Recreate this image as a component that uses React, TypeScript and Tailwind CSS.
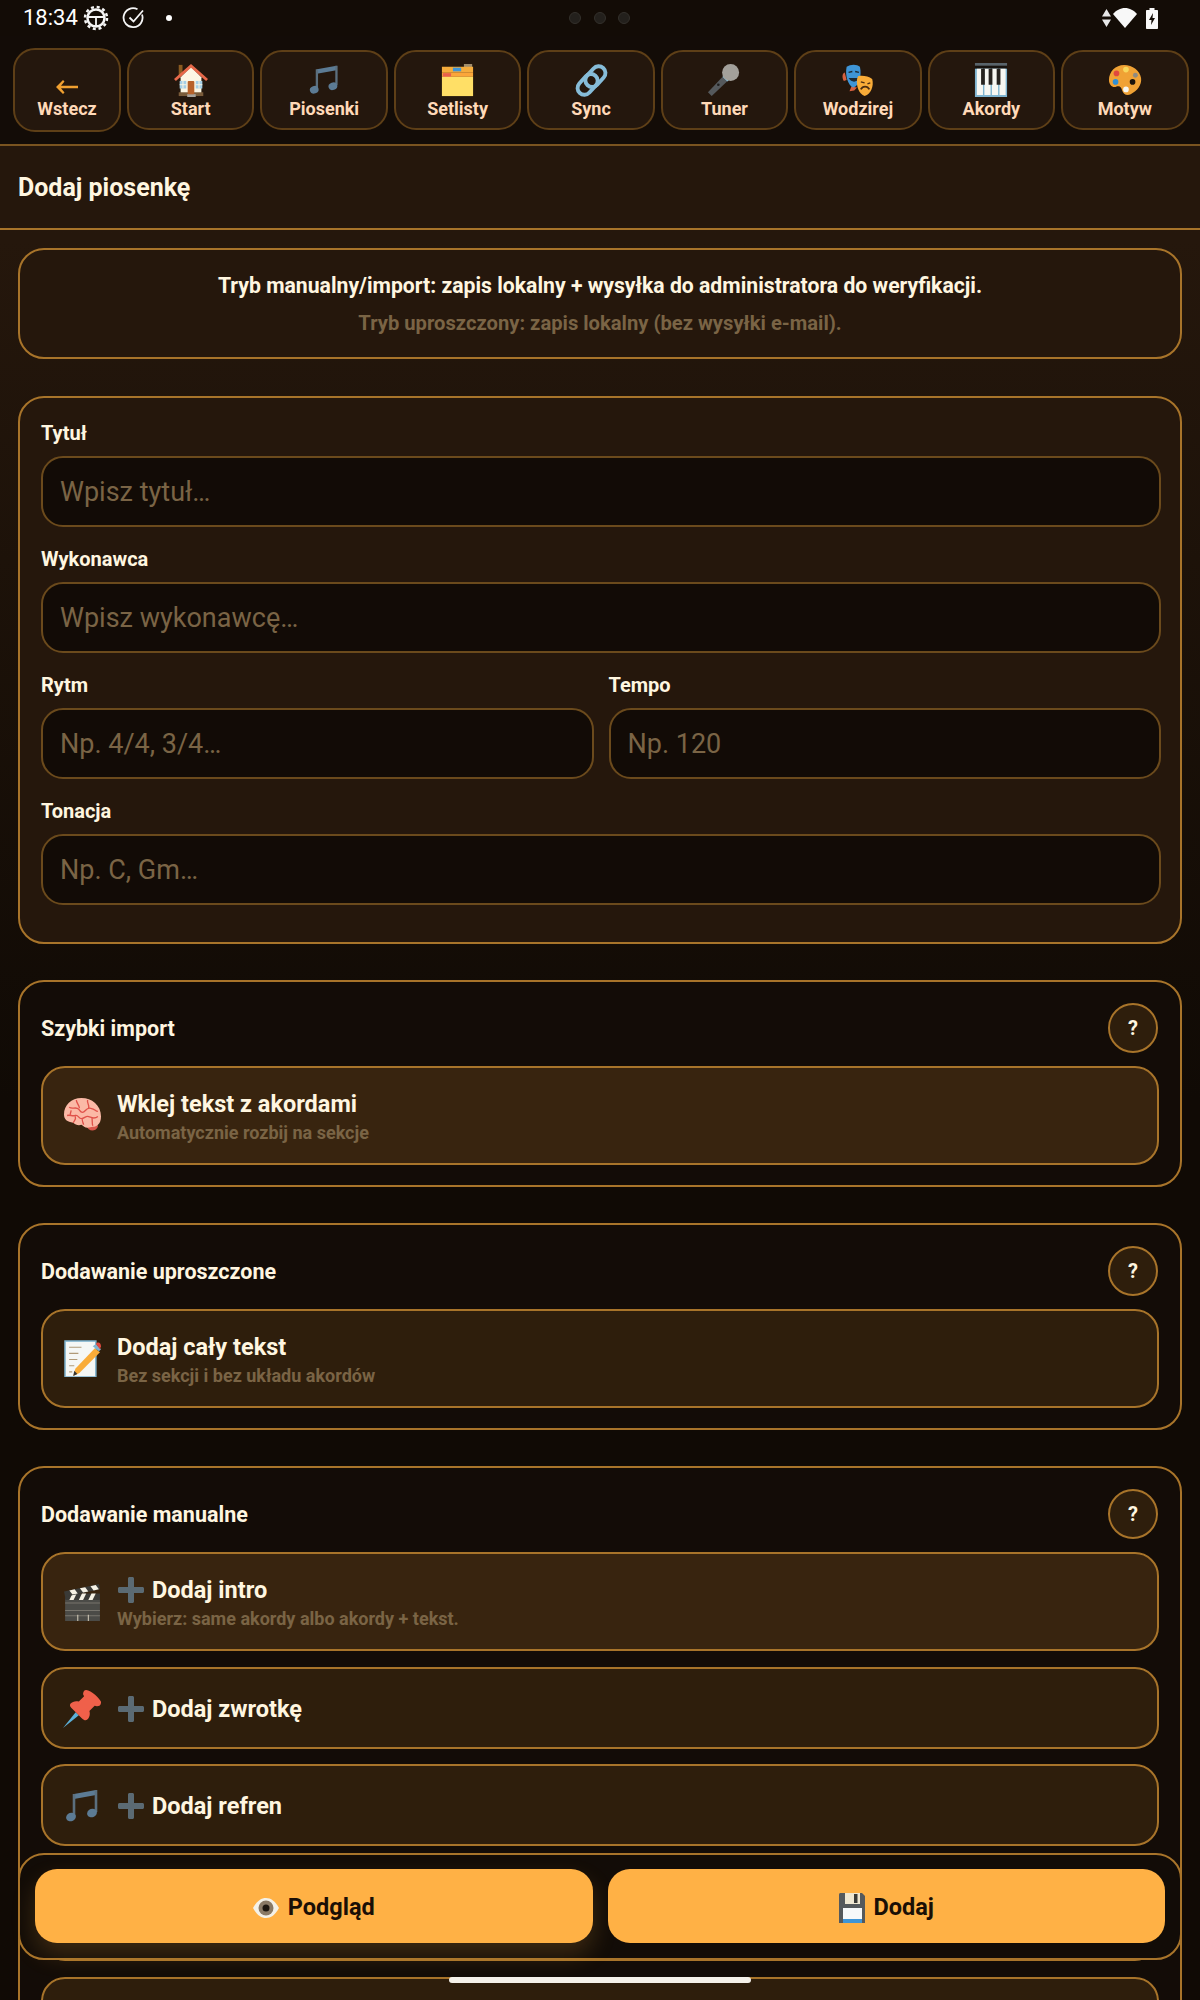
import React from 'react';

/* --- EMOJI DRAWINGS --- */

const House = ({ size = 36 }: { size?: number }) => (
    <svg width={size} height={size} viewBox="0 0 36 36">
        <rect x="5" y="2" width="4" height="12" fill="#8a5a20" />
        <path d="M7 32V15L18 4l11 11v17z" fill="#fdf6e3" />
        <path d="M0 17L18 1l18 16-2 2L18 5 2 19z" fill="#e8694a" />
        <rect x="5" y="31" width="26" height="4" fill="#7a5c3a" />
        <rect x="14" y="33" width="9" height="3" fill="#a8a29a" />
        <rect x="14.5" y="19" width="7" height="14" rx="1" fill="#b8622a" />
        <rect x="6" y="19" width="7" height="8" fill="#a5cfe6" />
        <rect x="23" y="19" width="7" height="8" fill="#a5cfe6" />
        <path d="M9.5 19v8M6 23h7M26.5 19v8M23 23h7" stroke="#fdf6e3" strokeWidth="1" />
    </svg>
);

const Notes = ({ size = 36 }: { size?: number }) => (
    <svg width={size} height={size} viewBox="0 0 36 36">
        <path d="M10 6l22-4v5l-22 4z" fill="#5c7b94" />
        <path d="M10 6v22M32 2v22" stroke="#5b6f7e" strokeWidth="2.6" />
        <ellipse cx="7" cy="29" rx="5" ry="4.2" transform="rotate(-20 7 29)" fill="#5c7b94" />
        <ellipse cx="28" cy="25" rx="5" ry="4.2" transform="rotate(-20 28 25)" fill="#5c7b94" />
    </svg>
);

const Dividers = ({ size = 36 }: { size?: number }) => (
    <svg width={size} height={size} viewBox="0 0 36 36">
        <rect x="25" y="0" width="9" height="4" fill="#a08c6a" />
        <rect x="1" y="3" width="34" height="6" fill="#f5ac3c" />
        <rect x="13" y="4" width="9" height="4" fill="#3f95d6" />
        <rect x="1" y="9" width="34" height="5" fill="#fba63a" />
        <rect x="2" y="10" width="9" height="4" fill="#e8604c" />
        <rect x="1" y="14" width="34" height="21" fill="#ffdf66" />
    </svg>
);

const LinkIcon = ({ size = 36 }: { size?: number }) => (
    <svg width={size} height={size} viewBox="0 0 36 36" fill="none" stroke="#86bcd8" strokeWidth="4">
        <rect x="15" y="2" width="14" height="24" rx="7" transform="rotate(42 22 14)" />
        <rect x="7" y="10" width="14" height="24" rx="7" transform="rotate(42 14 22)" />
    </svg>
);

const Mic = ({ size = 36 }: { size?: number }) => (
    <svg width={size} height={size} viewBox="0 0 36 36">
        <path d="M19 12l5 5L5 35l-4-4z" fill="#55595c" />
        <path d="M16.500 14.500l5 5 3-2.500-5.500-5.500z" fill="#8dc3dd" />
        <circle cx="25" cy="10" r="9" fill="#a3a09a" />
        <circle cx="12" cy="23" r="1.400" fill="#1f1f1f" />
    </svg>
);

const Masks = ({ size = 36 }: { size?: number }) => (
    <svg width={size} height={size} viewBox="0 0 36 36">
        <path d="M4 10c-3 1-3 6-1 9l3-1zM11 25l-2 5 5-1 3-3z" fill="#d5603f" />
        <path d="M6 4c4-3 11-3 14 0 2 8 0 20-7 22C7 24 4 12 6 4z" fill="#3f95d6" />
        <path d="M8 16c3 5 9 5 11 0z" fill="#1e2a33" />
        <path d="M8 10l4-1M15 9l4 1" stroke="#1e2a33" strokeWidth="1.400" fill="none" />
        <path d="M18 14c5-1 11 0 15 3 2 7-1 16-8 18-6-2-9-10-8-18z" fill="#f9ac38" />
        <path d="M21 28c2-4 7-4 9 0" stroke="#4a2c10" strokeWidth="2" fill="none" />
        <path d="M21 20l4 1M28 22l3-1" stroke="#4a2c10" strokeWidth="1.400" />
    </svg>
);

const Piano = ({ size = 36 }: { size?: number }) => (
    <svg width={size} height={size} viewBox="0 0 36 36">
        <rect x="1" y="0" width="34" height="3" fill="#59646b" />
        <rect x="1" y="3" width="34" height="3" fill="#17130f" />
        <rect x="1" y="6" width="34" height="30" fill="#7fb4d0" />
        <path d="M3 6h6.500v28H3zM11 6h6.500v28H11zM19 6h6.500v28H19zM27 6h6.500v28H27z" fill="#f7f7f2" />
        <path d="M7.500 6h4v17h-4zM15.500 6h4v17h-4zM24 6h4v17h-4z" fill="#27231f" />
    </svg>
);

const Palette = ({ size = 36 }: { size?: number }) => (
    <svg width={size} height={size} viewBox="0 0 36 36">
        <path d="M17 2C8 2 1 9 1 18c0 5 4 9 8 7 4-1 5 1 6 4 1 4 5 6 9 4 7-3 12-10 11-17-1-8-9-14-18-14z" fill="#f0a235" />
        <circle cx="9" cy="11" r="3" fill="#e0483e" />
        <circle cx="19" cy="7" r="3" fill="#f7d75c" />
        <circle cx="29" cy="13" r="2.600" fill="#8f8a80" />
        <circle cx="8" cy="20" r="3" fill="#2f8fd6" />
        <circle cx="26" cy="20" r="3" fill="#1b130b" />
        <circle cx="19" cy="28" r="3" fill="#f6f6f0" />
    </svg>
);

const Brain = ({ size = 37 }: { size?: number }) => (
    <svg width={size} height={size} viewBox="0 0 36 36">
        <path d="M22 28c1 5 8 7 11 1l-1-6z" fill="#d9574c" />
        <path d="M0 17C0 8 7 1 17 1c10 0 19 7 19 18 0 7-4 10-8 10l-5 1c-3 0-4-2-6-3-3 1-6 0-8-2C3 24 0 22 0 17z" fill="#fbb9a6" />
        <path d="M5 10c3 2 5 0 8 1s2 4 5 4 3-5 8-4 4 3 7 3M3 18c3-1 5 1 8 0s3 3 6 3 4-3 7-2 5 3 9 0M12 3c0 3 3 5 3 8M23 3c-1 3 2 4 1 8M9 25c1-2 3-3 2-6M19 27c0-2-2-3-1-6M28 28c-1-3 0-5-1-8M7 13l-1 4" stroke="#e0524a" strokeWidth="1.300" fill="none" />
    </svg>
);

const Memo = ({ size = 37 }: { size?: number }) => (
    <svg width={size} height={size} viewBox="0 0 36 36">
        <rect x="1" y="1" width="30" height="35" fill="#f5f7f5" stroke="#7fb4d0" strokeWidth="1.500" />
        <path d="M5 7h12M5 13h9M5 19h8M5 25h5M5 31h3" stroke="#b09a78" strokeWidth="1" />
        <path d="M30 8l5 4-20 20-6 3 2-7z" fill="#f9ac38" />
        <path d="M28 6l6 5 2-2-5-5z" fill="#7fb4d0" />
        <path d="M31 4c2-3 5-1 5 2l-1 3z" fill="#e0483e" />
        <path d="M9 35l1-5 3 3z" fill="#333" />
    </svg>
);

const Clapper = ({ size = 38 }: { size?: number }) => (
    <svg width={size} height={size} viewBox="0 0 36 36">
        <rect x="2" y="15" width="33" height="21" fill="#4b4b47" />
        <path d="M2 19h33M2 26h33M2 31h33" stroke="#78756d" strokeWidth="1" />
        <path d="M14 30v6M24 30v6" stroke="#cfc8b5" strokeWidth="1" />
        <rect x="2" y="10" width="33" height="6" fill="#3a3a37" />
        <path d="M6 16l3-6h4l-3 6zM15 16l3-6h4l-3 6zM24 16l3-6h4l-3 6z" fill="#f5f1e4" />
        <path d="M1 8l33-7 1 5L2 13z" fill="#3a3a37" />
        <path d="M6 7l5-1 3 4-5 1zM16 5l5-1 3 4-5 1zM26 3l5-1 3 4-5 1z" fill="#f5f1e4" />
    </svg>
);

const Pin = ({ size = 38 }: { size?: number }) => (
    <svg width={size} height={size} viewBox="0 0 36 36">
        <path d="M0 36l12-15 3 3z" fill="#5cb0d8" />
        <path d="M22 0c-2 0-3 2-3 4l1 2-5 5c-3-1-6 0-8 2-1 2 0 3 2 5l9 9c2 2 4 2 5 1 2-2 3-5 2-8l5-5c3 1 6 0 6-3 1-2-9-12-14-12z" fill="#f0604a" />
    </svg>
);

const Plus = () => (
    <svg width={26} height={26} viewBox="0 0 26 26" className="shrink-0 ml-[1px]">
        <path d="M10 1.500c0-.8.7-1.500 1.500-1.500h3c.8 0 1.500.7 1.500 1.500V10h8.500c.8 0 1.500.7 1.500 1.500v3c0 .8-.7 1.500-1.500 1.500H16v8.500c0 .8-.7 1.500-1.500 1.500h-3c-.8 0-1.500-.7-1.500-1.500V16H1.500C.7 16 0 15.300 0 14.500v-3C0 10.700.7 10 1.500 10H10z" fill="#5b6a73" />
    </svg>
);

const Eye = () => (
    <svg width={26} height={20} viewBox="0 0 26 20">
        <path d="M0 10C4 3 8 0 13 0s9 3 13 10c-4 7-8 10-13 10S4 17 0 10z" fill="#f4f1e8" />
        <circle cx="13" cy="10" r="7.500" fill="#8a7a66" />
        <circle cx="13" cy="10" r="3.500" fill="#1d1710" />
    </svg>
);

const Floppy = () => (
    <svg width={26} height={30} viewBox="0 0 26 30">
        <path d="M0 1.500C0 .7.7 0 1.500 0H23l3 3v27H0z" fill="#55595c" />
        <rect x="6" y="0" width="15" height="11" fill="#efe7d2" />
        <rect x="15" y="1" width="3.500" height="9" fill="#3a3a37" />
        <rect x="4" y="15" width="19" height="12" fill="#f7f9fa" />
        <rect x="4" y="26" width="19" height="4" fill="#3f95d6" />
    </svg>
);

/* --- STATUS BAR --- */

const StatusBar = () => (
    <div className="h-[36px] shrink-0 bg-[#130c06] flex items-center relative text-white">
        <span className="ml-[23px] text-[22px] leading-none w-[56px]">18:34</span>
        <svg width="26" height="26" viewBox="0 0 26 26" className="ml-[4px]" fill="none" stroke="#f5f5f5">
            <circle cx="13" cy="13" r="8.500" strokeWidth="2.500" />
            <circle cx="13" cy="13" r="11" strokeWidth="2.500" strokeDasharray="3 2.800" />
            <path d="M5 12h16M13 12v9" strokeWidth="1.800" />
        </svg>
        <svg width="24" height="24" viewBox="0 0 24 24" className="ml-[13px]" fill="none" stroke="#f5f5f5" strokeWidth="1.800">
            <path d="M20 8.500A9.500 9.500 0 1 1 15.500 3.300" />
            <path d="M7.500 11.500l4 4L21 4.500" />
        </svg>
        <span className="ml-[20px] w-[6px] h-[6px] rounded-full bg-white" />
        <div className="absolute left-[569px] top-[12px] flex gap-[12.5px]">
            <span className="w-[12px] h-[12px] rounded-full bg-[#23201c] border border-[#33302b]" />
            <span className="w-[12px] h-[12px] rounded-full bg-[#23201c] border border-[#33302b]" />
            <span className="w-[12px] h-[12px] rounded-full bg-[#23201c] border border-[#33302b]" />
        </div>
        <div className="ml-auto mr-[42px] flex items-center">
            <svg width="9" height="18" viewBox="0 0 9 18" fill="#e8e8e8">
                <path d="M4.500 0L9 7.500H0zM4.500 18L0 10.500h9z" />
            </svg>
            <svg width="24" height="20" viewBox="0 0 24 20" className="ml-[2px]" fill="#f8f8f8">
                <path d="M0 6C3 2.500 7.500 0 12 0s9 2.500 12 6L12 20z" />
            </svg>
            <svg width="12" height="21" viewBox="0 0 12 21" className="ml-[9px]">
                <path d="M3.500 0h5v2H11c.6 0 1 .4 1 1v17c0 .6-.4 1-1 1H1c-.6 0-1-.4-1-1V3c0-.6.4-1 1-1h2.500z" fill="#f8f8f8" />
                <path d="M7 5L3 12h2.500L5 17l4-7H6.500z" fill="#130c06" />
            </svg>
        </div>
    </div>
);

/* --- NAV --- */

const NavButton = ({ label, icon }: { label: string, icon: React.ReactNode }) => (
    <div className="w-[127.45px] h-[80px] shrink-0 bg-[#24170d] border-2 border-[#5e3f17] rounded-[22px] flex flex-col items-center pt-[11px]">
        <div className="h-[34px] flex items-center justify-center">{icon}</div>
        <span className="text-[18px] leading-[20px] font-bold text-[#ffd9b8] mt-[2px]">{label}</span>
    </div>
);

const TopNav = () => (
    <div className="h-[110px] shrink-0 bg-[#130c07] border-b-2 border-[#7a5420] flex items-center pl-[13px] gap-[6px]">
        <div className="w-[108px] h-[84px] shrink-0 bg-[#24170d] border-2 border-[#5e3f17] rounded-[22px] flex flex-col items-center pt-[30px]">
            <svg width="22" height="14" viewBox="0 0 22 14" fill="#f0a030">
                <path d="M7 0l1.500 1.500L5 5.800h17v2.400H5l3.500 4.300L7 14 0 7z" />
            </svg>
            <span className="text-[18px] leading-[20px] font-bold text-[#ffd9b8] mt-[5px]">Wstecz</span>
        </div>
        <NavButton label="Start" icon={<House size={34} />} />
        <NavButton label="Piosenki" icon={<Notes size={32} />} />
        <NavButton label="Setlisty" icon={<Dividers size={33} />} />
        <NavButton label="Sync" icon={<LinkIcon size={35} />} />
        <NavButton label="Tuner" icon={<Mic size={34} />} />
        <NavButton label="Wodzirej" icon={<Masks size={34} />} />
        <NavButton label="Akordy" icon={<Piano size={34} />} />
        <NavButton label="Motyw" icon={<Palette size={34} />} />
    </div>
);

/* --- FORM PARTS --- */

const Field = ({ label, placeholder, className }: { label: string, placeholder: string, className?: string }) => (
    <div className={className}>
        <div className="h-[22px] flex items-center text-[20px] font-bold text-[#fff6e0]">{label}</div>
        <input
            placeholder={placeholder}
            className="mt-[12px] w-full h-[71px] bg-[#120b06] border-2 border-[#6b4a1c] rounded-[22px] pl-[17px] text-[27px] text-[#fff6e0] placeholder:text-[#7a6445] focus:outline-none"
        />
    </div>
);

const HelpRow = ({ title }: { title: string }) => (
    <div className="h-[50px] flex items-center justify-between">
        <h3 className="text-[21.5px] font-bold text-[#fff6e0] mt-[3px]">{title}</h3>
        <button className="w-[50px] h-[50px] mr-[1px] rounded-full bg-[#2e1e0c] border-2 border-[#a8742a] text-[20px] font-bold text-[#fff6e0]">?</button>
    </div>
);

const ActionRow = ({ icon, title, sub, plus, h = 'h-[99px]', bg = 'bg-[#2e1e0c]' }: { icon?: React.ReactNode, title?: string, sub?: string, plus?: boolean, h?: string, bg?: string }) => (
    <div className={`${h} ${bg} shrink-0 border-2 border-[#a8742a] rounded-[24px] flex items-center pl-[20px]`}>
        {icon && <div className="w-[38px] flex justify-center shrink-0">{icon}</div>}
        <div className="ml-[16px]">
            {title && (
                <div className="flex items-center gap-[8px] text-[23.5px] leading-[30px] font-bold text-[#fff6e0]">
                    {plus && <Plus />}
                    <span>{title}</span>
                </div>
            )}
            {sub && <div className="text-[18px] leading-[20px] font-bold text-[#7a6445] mt-[4px]">{sub}</div>}
        </div>
    </div>
);

const App = () => {
    return (
        <div className="relative w-[1200px] h-[2000px] overflow-hidden flex flex-col font-['Roboto',sans-serif] bg-linear-to-b from-[#25170c] from-[12%] to-[#100a05] to-[55%]">
            <StatusBar />
            <TopNav />

            {/* HEADER */}
            <div className="h-[84px] shrink-0 bg-[#25170c] border-b-2 border-[#a8742a] flex items-center pl-[18px] pt-[2px]">
                <h1 className="text-[25px] font-bold text-[#fff6e0]">Dodaj piosenkę</h1>
            </div>

            <div className="px-[18px] pt-[18px] flex flex-col gap-[36px]">
                {/* INFO */}
                <section className="h-[111px] shrink-0 bg-[#25170c] border-2 border-[#a8742a] rounded-[26px] flex flex-col items-center pt-[22px]">
                    <p className="text-[21.2px] leading-[28px] font-bold text-[#fff6e0]">Tryb manualny/import: zapis lokalny + wysyłka do administratora do weryfikacji.</p>
                    <p className="text-[20.2px] leading-[24px] font-bold text-[#7a6445] mt-[11px]">Tryb uproszczony: zapis lokalny (bez wysyłki e-mail).</p>
                </section>

                {/* SONG FIELDS */}
                <section className="h-[548px] mt-[1px] shrink-0 bg-[#25170c] border-2 border-[#a8742a] rounded-[26px] pl-[21px] pr-[19px] pt-[24px] flex flex-col gap-[21px]">
                    <Field label="Tytuł" placeholder="Wpisz tytuł…" />
                    <Field label="Wykonawca" placeholder="Wpisz wykonawcę…" />
                    <div className="flex gap-[15px]">
                        <Field label="Rytm" placeholder="Np. 4/4, 3/4…" className="flex-1" />
                        <Field label="Tempo" placeholder="Np. 120" className="flex-1" />
                    </div>
                    <Field label="Tonacja" placeholder="Np. C, Gm…" />
                </section>

                {/* QUICK IMPORT */}
                <section className="h-[207px] shrink-0 bg-[#130c07] border-2 border-[#a8742a] rounded-[26px] px-[21px] pt-[21px] flex flex-col gap-[13px]">
                    <HelpRow title="Szybki import" />
                    <ActionRow icon={<Brain />} title="Wklej tekst z akordami" sub="Automatycznie rozbij na sekcje" bg="bg-[#38240f]" />
                </section>

                {/* SIMPLE */}
                <section className="h-[207px] shrink-0 bg-[#130c07] border-2 border-[#a8742a] rounded-[26px] px-[21px] pt-[21px] flex flex-col gap-[13px]">
                    <HelpRow title="Dodawanie uproszczone" />
                    <ActionRow icon={<Memo />} title="Dodaj cały tekst" sub="Bez sekcji i bez układu akordów" />
                </section>

                {/* MANUAL */}
                <section className="shrink-0 bg-[#130c07] border-2 border-[#a8742a] rounded-[26px] px-[21px] pt-[21px] pb-[20px] flex flex-col gap-[15px]">
                    <div className="mb-[-2px]"><HelpRow title="Dodawanie manualne" /></div>
                    <ActionRow icon={<Clapper />} title="Dodaj intro" sub="Wybierz: same akordy albo akordy + tekst." plus h="h-[99px] mb-[1px]" bg="bg-[#38240f]" />
                    <ActionRow icon={<Pin />} title="Dodaj zwrotkę" plus h="h-[82px] pt-[2px]" />
                    <ActionRow icon={<Notes />} title="Dodaj refren" plus h="h-[82px] pt-[2px]" />
                    <ActionRow h="h-[100px] mb-[1px]" />
                    <ActionRow />
                </section>
            </div>

            {/* STICKY ACTIONS */}
            <div className="absolute left-[18px] right-[18px] bottom-[40px] h-[107px] bg-[#120c07] border-2 border-[#a8742a] rounded-[26px] flex gap-[15px] pl-[15px] pr-[15px] pt-[14px]">
                <button className="flex-1 h-[74px] pt-[3px] bg-[#ffb145] rounded-[22px] flex items-center justify-center gap-[9px] text-[23.5px] font-bold text-[#1a0f06] shadow-[0_12px_24px_rgba(255,177,69,0.18)]">
                    <Eye />
                    <span>Podgląd</span>
                </button>
                <button className="flex-1 h-[74px] pt-[3px] bg-[#ffb145] rounded-[22px] flex items-center justify-center gap-[9px] text-[23.5px] font-bold text-[#1a0f06]">
                    <Floppy />
                    <span>Dodaj</span>
                </button>
            </div>

            {/* GESTURE BAR */}
            <div className="absolute left-[449px] top-[1977px] w-[302px] h-[6px] rounded-full bg-[#f5f1ea]" />
        </div>
    );
};

export default App;
